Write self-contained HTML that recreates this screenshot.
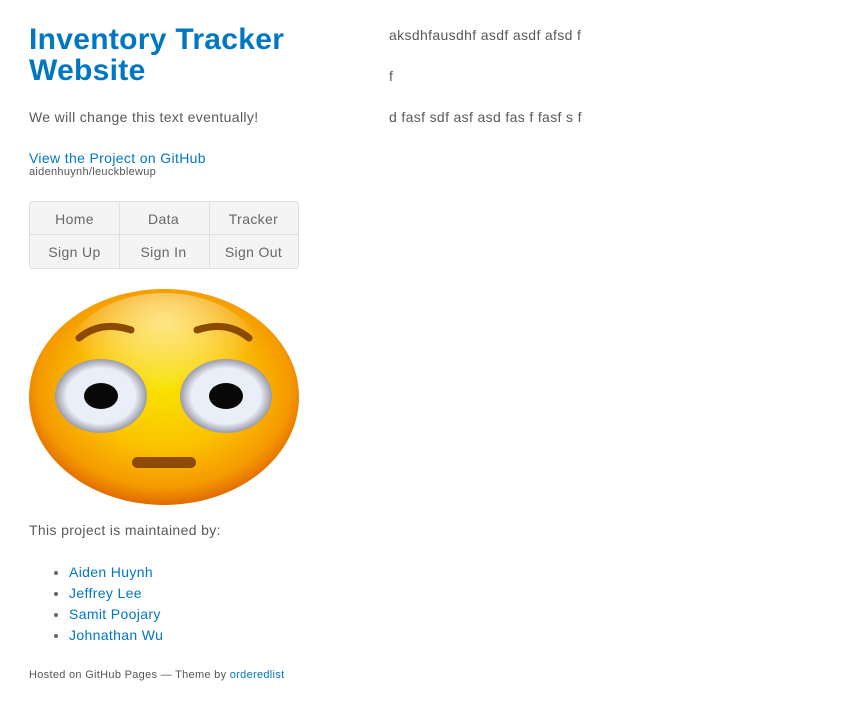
<!DOCTYPE html>
<html><head><meta charset="utf-8"><style>
body{margin:0;background:#fff;font-family:"Liberation Sans",sans-serif;font-size:14px;color:#595959;letter-spacing:0.35px}
.abs{position:absolute;white-space:nowrap;}
a{color:#0077c2;text-decoration:none}
h1{position:absolute;left:29px;top:24px;margin:0;font-size:30px;line-height:31px;color:#0077c2;font-weight:bold;letter-spacing:0.3px}
.nav{position:absolute;left:29px;top:201px;width:268px;height:66px;border:1px solid #e0e0e0;border-radius:4px;background:#f4f4f4;overflow:hidden}
.nav div{position:absolute;width:89px;height:32px;line-height:34px;text-align:center;color:#676767;font-size:14px;}
.vl{position:absolute;top:0;bottom:0;width:1px;background:#e0e0e0}
ul{position:absolute;left:29px;top:562px;margin:0;padding-left:40px;line-height:21px;}
li::marker{color:#666}
</style></head><body>
<h1>Inventory Tracker<br>Website</h1>
<div class="abs" style="left:29px;top:109px">We will change this text eventually!</div>
<div class="abs" style="left:29px;top:150px"><a href="#">View the Project on GitHub</a></div>
<div class="abs" style="left:29px;top:166px;font-size:11px;color:#555;letter-spacing:0.3px">aidenhuynh/leuckblewup</div>
<div class="nav">
<div style="left:0;top:0">Home</div><div style="left:89px;top:0">Data</div><div style="left:179px;top:0">Tracker</div>
<div style="left:0;top:33px">Sign Up</div><div style="left:89px;top:33px">Sign In</div><div style="left:179px;top:33px">Sign Out</div>
<div class="vl" style="left:89px;width:1px;height:66px;background:#e0e0e0"></div><div class="vl" style="left:179px;width:1px;height:66px;background:#e0e0e0"></div>
<div style="left:0;top:32px;width:268px;height:1px;background:#e0e0e0"></div>
</div>
<svg style="position:absolute;left:29px;top:288px" width="270" height="218" viewBox="0 0 270 218">
<defs>
<radialGradient id="f" cx="50%" cy="45%" r="55%"><stop offset="0" stop-color="#f7e400"/><stop offset="0.5" stop-color="#fbc400"/><stop offset="0.85" stop-color="#f59a00"/><stop offset="1" stop-color="#e06a00"/></radialGradient>
<radialGradient id="hl" cx="50%" cy="20%" r="50%"><stop offset="0" stop-color="#fff6c0" stop-opacity=".7"/><stop offset="1" stop-color="#fff" stop-opacity="0"/></radialGradient>
<radialGradient id="e" cx="50%" cy="50%" r="50%"><stop offset="0.75" stop-color="#e9eef8"/><stop offset="1" stop-color="#9a9aa6"/></radialGradient>
</defs>
<ellipse cx="135" cy="109" rx="135" ry="108" fill="url(#f)"/>
<ellipse cx="135" cy="75" rx="100" ry="70" fill="url(#hl)"/>
<path d="M50 50 Q72 32 102 42" stroke="#8a4a00" stroke-width="7" fill="none" stroke-linecap="round"/>
<path d="M168 42 Q198 32 220 50" stroke="#8a4a00" stroke-width="7" fill="none" stroke-linecap="round"/>
<ellipse cx="72" cy="108" rx="46" ry="37" fill="url(#e)"/>
<ellipse cx="197" cy="108" rx="46" ry="37" fill="url(#e)"/>
<ellipse cx="72" cy="108" rx="17" ry="13" fill="#080808"/>
<ellipse cx="197" cy="108" rx="17" ry="13" fill="#080808"/>
<rect x="103" y="169" width="64" height="11" rx="5.5" fill="#8e4a05"/>
</svg>
<div class="abs" style="left:29px;top:522px">This project is maintained by:</div>
<ul><li><a href="#">Aiden Huynh</a></li><li><a href="#">Jeffrey Lee</a></li><li><a href="#">Samit Poojary</a></li><li><a href="#">Johnathan Wu</a></li></ul>
<div class="abs" style="left:29px;top:669px;font-size:11px;color:#555;letter-spacing:0.3px">Hosted on GitHub Pages — Theme by <a href="#">orderedlist</a></div>
<div class="abs" style="left:389px;top:27px">aksdhfausdhf asdf asdf afsd f</div>
<div class="abs" style="left:389px;top:68px">f</div>
<div class="abs" style="left:389px;top:109px">d fasf sdf asf asd fas f fasf s f</div>
</body></html>
